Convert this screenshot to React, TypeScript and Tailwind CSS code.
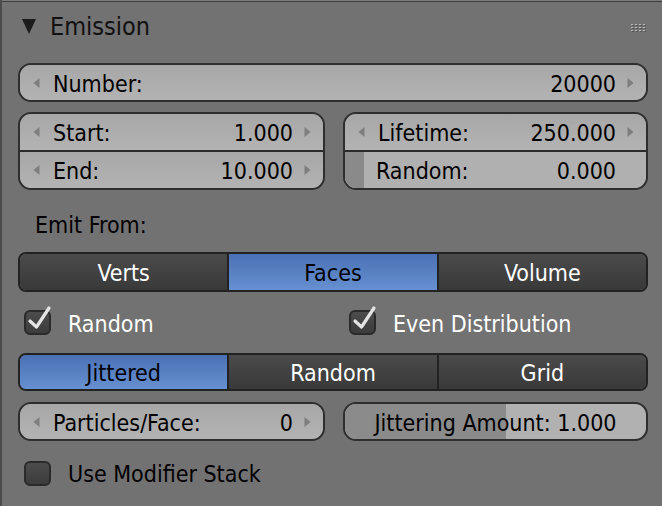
import React from "react";

// Blender "Emission" particle panel

type Field = { label: string; value: string; h?: string };

function ArrowLeft() {
  return (
    <svg width="7" height="11" viewBox="0 0 7 11" className="absolute left-[13px] top-1/2 -translate-y-1/2">
      <polygon points="6.5,0.5 0.5,5.5 6.5,10.5" fill="#7e7e7e" />
    </svg>
  );
}

function ArrowRight() {
  return (
    <svg width="7" height="11" viewBox="0 0 7 11" className="absolute right-[12px] top-1/2 -translate-y-1/2">
      <polygon points="0.5,0.5 6.5,5.5 0.5,10.5" fill="#7e7e7e" />
    </svg>
  );
}

function NumRow({ label, value, h = "h-[36px]" }: Field) {
  return (
    <div className={"relative flex items-center justify-between pl-[33px] pr-[30px] pt-[3px] bg-gradient-to-b from-[#a7a7a7] to-[#b3b3b3] text-black " + h}>
      <ArrowLeft />
      <span>{label}</span>
      <span>{value}</span>
      <ArrowRight />
    </div>
  );
}

function Check({ label, checked }: { label: string; checked: boolean }) {
  return (
    <div className="flex items-center pl-[6px]">
      <div className="relative w-[27px] h-[25px] rounded-[6px] border-2 border-[#2a2a2a] bg-gradient-to-b from-[#4c4c4c] to-[#3c3c3c]">
        {checked && (
          <svg width="30" height="30" viewBox="0 0 30 30" className="absolute left-[-2px] top-[-7px] overflow-visible">
            <polyline points="6,16 12.5,22 25,3" fill="none" stroke="#e4e4e4" strokeWidth="3.2" strokeLinecap="round" strokeLinejoin="round" />
          </svg>
        )}
      </div>
      <span className={"ml-[17px] mt-[3px] " + (checked ? "text-white" : "text-black")}>{label}</span>
    </div>
  );
}

function Radio({ items, active, h }: { items: string[]; active: number; h: string }) {
  return (
    <div className={"flex rounded-[8px] border-2 border-[#222] overflow-hidden " + h}>
      {items.map((it, i) => (
        <div
          key={it}
          className={
            "flex-1 flex items-center justify-center pt-[3px] " +
            (i > 0 ? "border-l-2 border-[#222] " : "") +
            (i === active
              ? "bg-gradient-to-b from-[#4a71b3] to-[#6690d1] text-black"
              : "bg-gradient-to-b from-[#4b4b4b] to-[#393939] text-white")
          }
        >
          {it}
        </div>
      ))}
    </div>
  );
}

export default function App() {
  return (
    <div className="w-[662px] h-[506px] bg-[#727272] overflow-hidden border-l-2 border-[#4b4b4b] font-['DejaVu_Sans_Condensed','DejaVu_Sans',sans-serif] [font-stretch:condensed] text-[23px] leading-none">
      <div className="h-px bg-[#7c7c7c]" />
      <div className="h-px bg-[#3e3e3e]" />

      {/* header */}
      <div className="h-[48px] flex items-center pl-[20px] pr-[15px]">
        <svg width="14" height="15" viewBox="0 0 14 15">
          <polygon points="0,0 14,0 7,15" fill="#1c1c1c" />
        </svg>
        <span className="ml-[14px] text-[25px] text-[#111]">Emission</span>
        <svg width="16" height="8" viewBox="0 0 16 8" className="ml-auto mt-[3px]">
          {[0, 4, 8, 12].map((x) =>
            [0, 3, 6].map((y) => (
              <g key={x + "-" + y}>
                <rect x={x + 1} y={y + 1} width="2" height="1" fill="#555" />
                <rect x={x} y={y} width="2" height="1" fill="#bdbdbd" />
              </g>
            )),
          )}
        </svg>
      </div>

      <div className="pl-[16px] pr-[14px] pt-[13px]">
        {/* Number */}
        <div className="rounded-[13px] border-2 border-[#2e2e2e] overflow-hidden">
          <NumRow label="Number:" value="20000" h="h-[35px]" />
        </div>

        {/* Start / End + Lifetime / Random */}
        <div className="mt-[10px] grid grid-cols-[307px_305px] gap-[18px]">
          <div className="rounded-[13px] border-2 border-[#2e2e2e] overflow-hidden">
            <NumRow label="Start:" value="1.000" />
            <div className="h-[2px] bg-[#2a2a2a]" />
            <NumRow label="End:" value="10.000" />
          </div>
          <div className="rounded-[13px] border-2 border-[#2e2e2e] overflow-hidden">
            <NumRow label="Lifetime:" value="250.000" />
            <div className="h-[2px] bg-[#2a2a2a]" />
            <div className="relative h-[36px] flex items-center justify-between pl-[31px] pr-[30px] pt-[3px] bg-[#b0b0b0] text-black">
              <div className="absolute left-0 top-0 bottom-0 w-[19px] bg-[#8a8a8a]" />
              <span className="relative">Random:</span>
              <span className="relative">0.000</span>
            </div>
          </div>
        </div>

        {/* Emit From */}
        <div className="mt-[14px] h-[41px] flex items-center pl-[17px] pt-[2px] text-black">Emit From:</div>
        <div className="mt-[7px]">
          <Radio items={["Verts", "Faces", "Volume"]} active={1} h="h-[40px]" />
        </div>

        {/* checkboxes */}
        <div className="h-[61px] grid grid-cols-[307px_305px] gap-[18px] items-center">
          <Check label="Random" checked />
          <Check label="Even Distribution" checked />
        </div>

        <Radio items={["Jittered", "Random", "Grid"]} active={0} h="h-[38px]" />

        {/* Particles/Face + Jittering */}
        <div className="mt-[11px] grid grid-cols-[307px_305px] gap-[18px]">
          <div className="rounded-[13px] border-2 border-[#2e2e2e] overflow-hidden">
            <NumRow label="Particles/Face:" value="0" h="h-[35px]" />
          </div>
          <div className="relative rounded-[13px] border-2 border-[#2e2e2e] overflow-hidden h-[39px] flex items-center justify-center pt-[3px] bg-[#b1b1b1] text-black">
            <div className="absolute left-0 top-0 bottom-0 w-[161px] bg-[#8b8b8b]" />
            <span className="relative">Jittering Amount: 1.000</span>
          </div>
        </div>

        <div className="h-[64px] flex items-center">
          <Check label="Use Modifier Stack" checked={false} />
        </div>
      </div>
    </div>
  );
}
